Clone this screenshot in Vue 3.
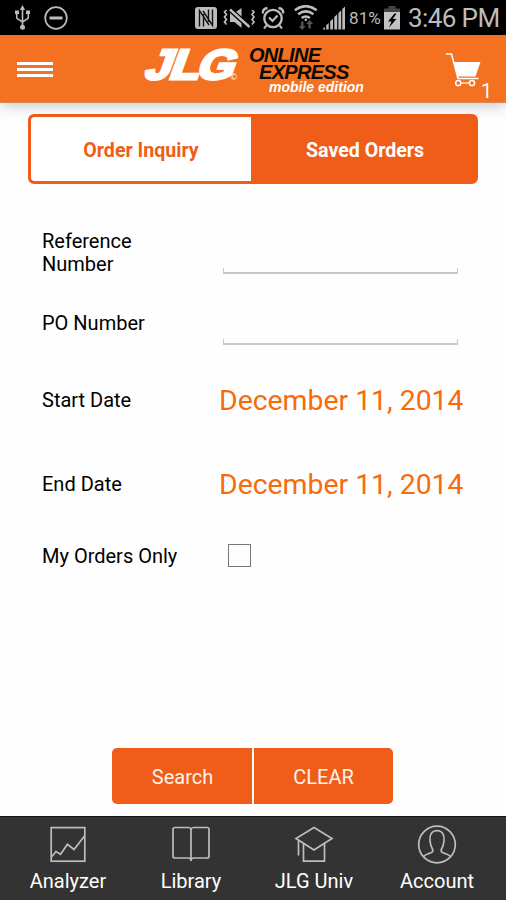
<template>
  <div class="screen">
    <div class="status">
      <svg class="usb" width="16" height="26" viewBox="15 6 16 26">
        <g fill="none" stroke="#bdbdbd" stroke-width="1.6">
          <path d="M22.5 9v19M16.7 14v4.200q0 1.500 1.500 2l4.300 2.800M28.300 14v4.200q0 1.500-1.500 2l-4.300 2.800" />
        </g>
        <path d="M22.500 6l2.600 5h-5.200zM15 11.500h4v3.500h-4zM26 11.500h4v3.500h-4z" fill="#bdbdbd" />
        <circle cx="22.500" cy="28.300" r="2.500" fill="#bdbdbd" />
      </svg>
      <svg class="block" width="24" height="24" viewBox="0 0 24 24">
        <circle cx="12" cy="12" r="10.800" fill="none" stroke="#bdbdbd" stroke-width="1.700" />
        <path d="M5.500 12h13" stroke="#bdbdbd" stroke-width="3" />
      </svg>
      <span class="grow"></span>
      <svg class="nfc" width="22" height="22" viewBox="195 7 22 22">
        <rect x="195" y="7" width="22" height="22" rx="3" fill="#bdbdbd" />
        <path d="M199.500 26.500V10.500l9.500 14.500M212.500 9.500v16l-9.500-14.500M203.500 14v12.500M208.500 9.500V22" fill="none" stroke="#111" stroke-width="1.400" />
      </svg>
      <svg class="mute" width="33" height="22" viewBox="223 7 33 22">
        <path d="M230 13h4.500l7-5v20l-7-6H230z" fill="#bdbdbd" />
        <path d="M229.500 9.200l20 18" stroke="#000" stroke-width="5" />
        <path d="M230 9.500l19.500 17.500" stroke="#bdbdbd" stroke-width="2.400" />
        <path d="M226.500 10l-2 2 2 2.500-2 2.500 2 2.500-2 2.500 2 2.500M252 10l2 2-2 2.500 2 2.500-2 2.500 2 2.500-2 2.500" fill="none" stroke="#bdbdbd" stroke-width="1.700" />
      </svg>
      <svg class="alarm" width="24" height="24" viewBox="261 6 24 24">
        <g fill="none" stroke="#bdbdbd">
          <circle cx="273" cy="18.500" r="8.700" stroke-width="2.300" />
          <path d="M263 13.500q-1-4.500 4.500-5.500M283 13.500q1-4.500-4.500-5.500" stroke-width="2.400" />
          <path d="M266.500 25.500l-2.500 3M279.500 25.500l2.500 3" stroke-width="2" />
          <path d="M269 17.500l3.500 3.500 5-5.500" stroke-width="2.200" />
        </g>
      </svg>
      <svg class="wifi" width="24" height="26" viewBox="294 5 24 26">
        <g fill="none" stroke="#bdbdbd" stroke-width="2.600">
          <path d="M294.800 10.200q11-8 21.900 0M298.200 14.200q7.500-5.500 15.200 0M301.600 18q4.100-3 8.300 0" />
        </g>
        <circle cx="305.800" cy="19.800" r="1.300" fill="#bdbdbd" />
        <path d="M301 21.500h2.500v4.500h2.200l-3.500 4-3.500-4h2.300zM308.300 28.500h2.500v-4.500h2.300l-3.500-4-3.500 4h2.200z" fill="#555" />
      </svg>
      <svg class="signal" width="23" height="24" viewBox="323 6 23 24">
        <path d="M323 29.500v-1l2-1.500v2.500zM326.200 29.500v-4.200l2.500-2.200v6.400zM330.200 29.500v-8.200l2.800-2.500v10.700zM334.300 29.500v-12.500l2.900-2.700v15.200zM338.400 29.500v-16.500l2.800-2.600v19.100zM342.300 29.500v-20.500l2.700-2.500v23z" fill="#bdbdbd" />
      </svg>
      <span class="percent">81%</span>
      <svg class="battery" width="17" height="24" viewBox="384 6 17 24">
        <path d="M388.500 6h7v2.500h4.500V12h-16V8.500h4.500z" fill="#444" />
        <path d="M384 12h16v17.500h-16z" fill="#c4c4c4" />
        <path d="M394.500 13.500l-6.500 8h3.500l-2.500 6 7.500-8.500h-3.700l3.700-5.500z" fill="#000" />
      </svg>
      <span class="clock">3:46 PM</span>
    </div>

    <header class="header">
      <button class="menu" aria-label="Menu"><i></i><i></i><i></i></button>
      <svg class="logo" width="98" height="36" viewBox="141 46 98 36">
        <g class="jlg" transform="translate(142 78.500) skewX(-20)">
          <text x="1" y="0" textLength="26" lengthAdjust="spacingAndGlyphs">J</text>
          <text x="25.500" y="0" textLength="30" lengthAdjust="spacingAndGlyphs">L</text>
          <text x="53" y="0" textLength="37" lengthAdjust="spacingAndGlyphs">G</text>
        </g>
        <text class="copy" x="230.500" y="79.500">©</text>
      </svg>
      <div class="title">
        <span class="online">ONLINE</span>
        <span class="express">EXPRESS</span>
        <span class="edition">mobile edition</span>
      </div>
      <div class="cart">
        <svg width="36" height="34" viewBox="445 53 36 34">
          <path d="M446 54h5.500l6.500 24.500h20.500" fill="none" stroke="#fff" stroke-width="1.500" />
          <path d="M453.500 62h27l-5 14.500h-17.800z" fill="#fff" />
          <circle cx="458.300" cy="83" r="2.600" fill="none" stroke="#fff" stroke-width="1.500" />
          <circle cx="472" cy="83" r="2.600" fill="none" stroke="#fff" stroke-width="1.500" />
          <path d="M461 83h8.500" stroke="#fff" stroke-width="1.300" />
        </svg>
        <span class="count">{{ count }}</span>
      </div>
    </header>

    <main class="content">
      <div class="tabs">
        <button
          v-for="(tab, i) in tabs"
          :key="tab"
          class="tab"
          :class="{ active: i === current }"
          @click="current = i"
        ><span>{{ tab }}</span></button>
      </div>

      <form class="form" @submit.prevent>
        <label class="row reference">
          <span class="label">Reference<br>Number</span>
          <span class="field"><input v-model="reference" type="text"></span>
        </label>
        <label class="row po">
          <span class="label">PO Number</span>
          <span class="field"><input v-model="po" type="text"></span>
        </label>
        <div class="row start">
          <span class="label">Start Date</span>
          <span class="date">{{ startDate }}</span>
        </div>
        <div class="row end">
          <span class="label">End Date</span>
          <span class="date">{{ endDate }}</span>
        </div>
        <label class="row mine">
          <span class="label">My Orders Only</span>
          <input v-model="mine" class="check" type="checkbox">
        </label>
      </form>

      <div class="actions">
        <button class="search"><span>Search</span></button>
        <button class="clear" @click="clear"><span>CLEAR</span></button>
      </div>
    </main>

    <nav class="bottom">
      <a class="analyzer">
        <svg width="40" height="40" viewBox="0 0 40 40">
          <rect x="3.200" y="3.600" width="33.600" height="33.600" />
          <path d="M3.500 33l4.500-5.500 4.500 2.800 7-10 6.500 5.200L36.500 12" />
        </svg>
        <span>Analyzer</span>
      </a>
      <a class="library">
        <svg width="40" height="40" viewBox="0 0 40 40">
          <path d="M20 5.500q-.5-2-2.500-2H4q-2 0-2 2v26.500q0 2 2 2h13.500q2.500 0 2.500 3 0-3 2.500-3H36q2 0 2-2V5.500q0-2-2-2H22.500q-2 0-2.500 2V36" />
        </svg>
        <span>Library</span>
      </a>
      <a class="univ">
        <svg width="40" height="40" viewBox="0 0 40 40">
          <path d="M20 3.500L38 14.500 20 26 2 14.500zM4.500 16v15.500M9.500 19.500v17.700h21V19.500" />
        </svg>
        <span>JLG Univ</span>
      </a>
      <a class="account">
        <svg width="40" height="40" viewBox="0 0 40 40">
          <circle cx="20" cy="20.500" r="18.300" />
          <path d="M6.500 32.500q1-1.500 8-4 2-1 1-3.500-2-3-2.500-8-1-10 7-10.500 8 .5 7 10.500-.5 5-2.500 8-1 2.500 1 3.500 7 2.500 8 4" />
        </svg>
        <span>Account</span>
      </a>
    </nav>
  </div>
</template>

<script setup>
import { ref } from "vue";

const tabs = ["Order Inquiry", "Saved Orders"];
const current = ref(0);
const count = ref(1);
const reference = ref("");
const po = ref("");
const startDate = ref("December 11, 2014");
const endDate = ref("December 11, 2014");
const mine = ref(false);

const clear = () => {
  reference.value = "";
  po.value = "";
  mine.value = false;
};
</script>

<style>
body {
  margin: 0;
  background: #fefefe;
}
</style>

<style scoped>
.screen {
  display: flex;
  flex-direction: column;
  width: 506px;
  height: 900px;
  overflow: hidden;
  background: #fefefe;
  font-family: Roboto, "Liberation Sans", sans-serif;
  color: #000;
}
button {
  border: 0;
  padding: 0;
  background: none;
  font: inherit;
  color: inherit;
}
svg {
  display: block;
  flex: none;
}
.status {
  display: flex;
  align-items: center;
  height: 35px;
  flex: none;
  padding: 0 7px 0 15px;
  background: #000;
  color: #bdbdbd;
  white-space: nowrap;
}
.status .block {
  margin-left: 13px;
}
.grow {
  flex: 1;
}
.mute {
  margin-left: 6px;
}
.alarm {
  margin-left: 5px;
}
.wifi {
  margin-left: 9px;
}
.signal {
  margin-left: 5px;
}
.percent {
  width: 32px;
  margin-left: 3px;
  font-size: 17px;
  letter-spacing: 0.1px;
  line-height: 35px;
  padding-top: 2px;
}
.battery {
  margin-left: 3px;
}
.clock {
  width: 91px;
  margin-left: 7px;
  font-size: 26px;
  letter-spacing: -0.6px;
  line-height: 35px;
  padding-top: 2px;
}
.header {
  display: flex;
  position: relative;
  z-index: 1;
  height: 67px;
  flex: none;
  background: #f47121;
  border-bottom: 1px solid #d98a5b;
  box-shadow: 0 2px 14px rgba(0, 0, 0, 0.24);
}
.menu {
  display: flex;
  flex-direction: column;
  gap: 3px;
  align-self: flex-start;
  margin: 27px 0 0 17px;
}
.menu i {
  width: 36px;
  height: 3px;
  background: #fff;
}
.logo {
  margin: 11px 0 0 88px;
  overflow: visible;
}
.jlg {
  font: bold 42px "Liberation Sans", Arial, sans-serif;
  fill: #fff;
  stroke: #fff;
  stroke-width: 3px;
}
.copy {
  font: 9px "Liberation Sans", Arial, sans-serif;
  fill: #fff;
}
.title {
  display: flex;
  flex-direction: column;
  margin: 12px 0 0 10px;
  width: 120px;
  font-family: "Liberation Sans", Arial, sans-serif;
  font-style: italic;
  font-weight: bold;
  color: #0b0805;
  white-space: nowrap;
}
.online,
.express {
  font-size: 20px;
  line-height: 17px;
  letter-spacing: -0.7px;
}
.express {
  margin-left: 10px;
}
.edition {
  margin-left: 20px;
  font-size: 14px;
  line-height: 13px;
  color: #fff;
}
.cart {
  display: flex;
  margin: 18px 0 0 76px;
}
.count {
  align-self: flex-end;
  font-size: 20px;
  line-height: 22px;
  color: #fff;
}
.content {
  display: flex;
  flex-direction: column;
  flex: 1;
  padding-top: 11px;
}
.tabs {
  display: flex;
  width: 450px;
  height: 70px;
  margin-left: 28px;
  box-sizing: border-box;
  border: 3px solid #f05d18;
  border-radius: 6px;
  overflow: hidden;
  background: #f05d18;
}
.tab {
  flex: 1;
  padding: 2px 0 0 4px;
  font-size: 19.6px;
  font-weight: bold;
  background: #f05d18;
  color: #fff;
}
.tab.active {
  flex: none;
  width: 220px;
  padding-left: 0;
  background: #fff;
  color: #f05d18;
  border-radius: 3px 0 0 3px;
}
.form {
  display: flex;
  flex-direction: column;
  padding-left: 42px;
  margin-top: 46px;
}
.row {
  display: flex;
}
.label {
  width: 177px;
  font-size: 20px;
  line-height: 23px;
}
.field {
  padding-left: 4px;
}
.field input {
  display: block;
  width: 235px;
  height: 30px;
  box-sizing: border-box;
  padding: 0 6px;
  border: solid #bfbfbf;
  border-width: 0 1px 2px;
  border-image: linear-gradient(transparent 24px, #c8c8c8 24px) 0 1 2;
  background: none;
  outline: none;
  font: 20px Roboto, sans-serif;
}
.reference {
  height: 81px;
}
.reference input {
  margin-top: 14px;
}
.po {
  height: 69px;
}
.po .label {
  padding-top: 1px;
}
.po input {
  margin-top: 4px;
}
.start {
  height: 84px;
}
.start,
.end {
  align-items: flex-start;
}
.start .label,
.end .label {
  padding-top: 9px;
}
.date {
  font-size: 28.4px;
  line-height: 41px;
  color: #f76b0c;
  white-space: nowrap;
}
.end {
  height: 81px;
}
.check {
  appearance: none;
  width: 23px;
  height: 23px;
  margin: -1px 0 0 9px;
  border: 1px solid #777;
}
.actions {
  display: flex;
  gap: 2px;
  width: 281px;
  height: 56px;
  margin: auto 0 12px 112px;
}
.actions button {
  flex: 1;
  padding-top: 2px;
  font-size: 20px;
  background: #f05d18;
  color: #fff2ec;
}
.actions .search {
  padding-left: 1px;
  border-radius: 5px 0 0 5px;
}
.actions .clear {
  border-radius: 0 5px 5px 0;
}
.bottom {
  display: flex;
  flex: none;
  height: 84px;
  box-sizing: border-box;
  padding: 0 6.5px;
  border-top: 1px solid #111;
  background: #333;
}
.bottom a {
  display: flex;
  flex-direction: column;
  align-items: center;
  width: 123px;
  padding-top: 7px;
  font-size: 20px;
  line-height: 34px;
  color: #fff;
}
.bottom svg {
  fill: none;
  stroke: #bdbdbd;
  stroke-width: 1.7;
}
</style>
